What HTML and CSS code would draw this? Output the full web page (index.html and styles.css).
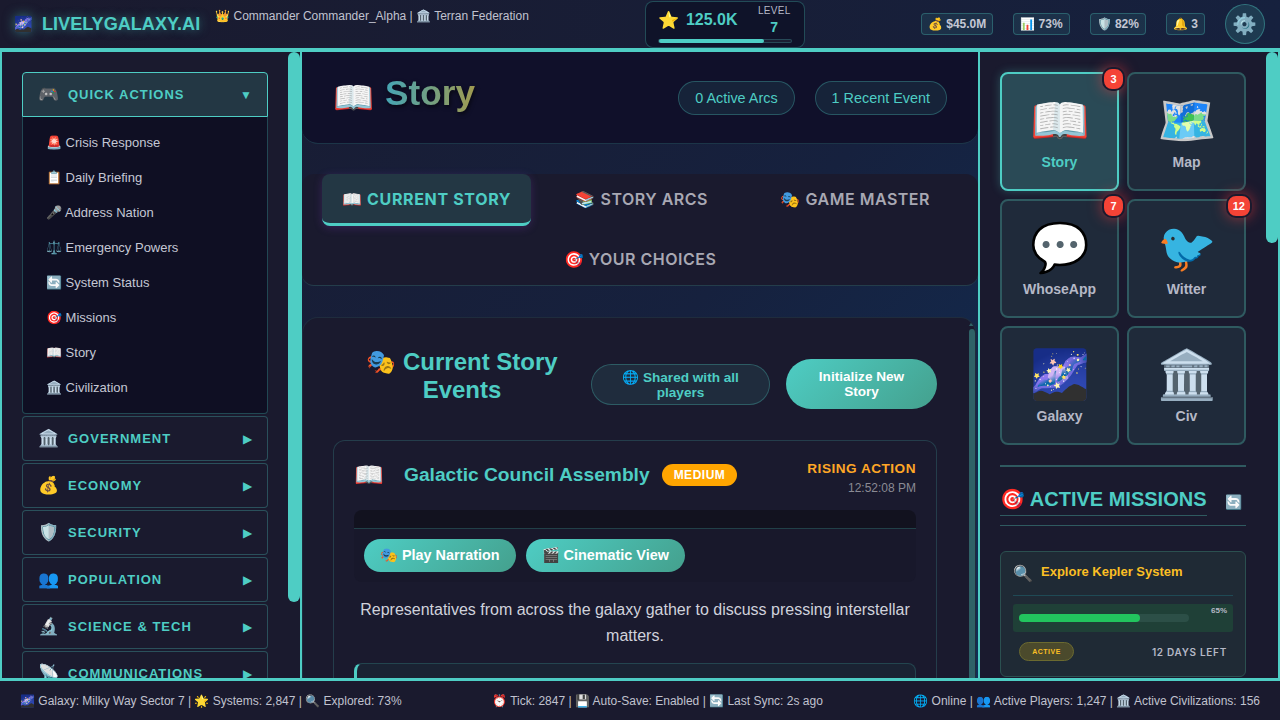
FILE: index.html
```html
<!DOCTYPE html>
<html lang="en">
<head>
<meta charset="utf-8">
<title>LivelyGalaxy.AI</title>
<link rel="stylesheet" href="styles.css">
</head>
<body>
<header class="topbar">
  <div class="brand-group">
    <div class="brand"><span class="brand-icon">🌌</span><span class="brand-name">LIVELYGALAXY.AI</span></div>
    <div class="user-line">👑 Commander Commander_Alpha | 🏛️ Terran Federation</div>
  </div>
  <div class="xp">
    <div class="xp-row">
      <span class="xp-star">⭐</span><span class="xp-value">125.0K</span>
      <div class="xp-level"><span class="xp-level-label">LEVEL</span><span class="xp-level-num">7</span></div>
    </div>
    <div class="xp-track"><div class="xp-fill"></div></div>
  </div>
  <div class="stats">
    <span class="stat">💰 $45.0M</span>
    <span class="stat">📊 73%</span>
    <span class="stat">🛡️ 82%</span>
    <span class="stat">🔔 3</span>
    <button class="gear">⚙️</button>
  </div>
</header>

<main class="layout">
  <nav class="rail rail-left">
    <span class="rail-thumb thumb-left"></span>
    <section class="menu open">
      <div class="menu-head"><span class="menu-icon">🎮</span><span class="menu-name">QUICK ACTIONS</span><span class="menu-arrow">▼</span></div>
      <ul class="submenu">
        <li>🚨 Crisis Response</li>
        <li>📋 Daily Briefing</li>
        <li>🎤 Address Nation</li>
        <li>⚖️ Emergency Powers</li>
        <li>🔄 System Status</li>
        <li>🎯 Missions</li>
        <li>📖 Story</li>
        <li>🏛️ Civilization</li>
      </ul>
    </section>
    <section class="menu"><div class="menu-head"><span class="menu-icon">🏛️</span><span class="menu-name">GOVERNMENT</span><span class="menu-arrow">▶</span></div></section>
    <section class="menu"><div class="menu-head"><span class="menu-icon">💰</span><span class="menu-name">ECONOMY</span><span class="menu-arrow">▶</span></div></section>
    <section class="menu"><div class="menu-head"><span class="menu-icon">🛡️</span><span class="menu-name">SECURITY</span><span class="menu-arrow">▶</span></div></section>
    <section class="menu"><div class="menu-head"><span class="menu-icon">👥</span><span class="menu-name">POPULATION</span><span class="menu-arrow">▶</span></div></section>
    <section class="menu"><div class="menu-head"><span class="menu-icon">🔬</span><span class="menu-name">SCIENCE &amp; TECH</span><span class="menu-arrow">▶</span></div></section>
    <section class="menu"><div class="menu-head"><span class="menu-icon">📡</span><span class="menu-name">COMMUNICATIONS</span><span class="menu-arrow">▶</span></div></section>
  </nav>

  <div class="center">
    <section class="page-head">
      <div class="page-title"><span class="page-emoji">📖</span><h1>Story</h1></div>
      <div class="page-chips"><span class="page-chip">0 Active Arcs</span><span class="page-chip">1 Recent Event</span></div>
    </section>

    <div class="tabs">
      <button class="tab active">📖 CURRENT STORY</button>
      <button class="tab">📚 STORY ARCS</button>
      <button class="tab">🎭 GAME MASTER</button>
      <button class="tab">🎯 YOUR CHOICES</button>
    </div>

    <section class="panel">
      <span class="panel-arrow"></span>
      <span class="panel-thumb"></span>
      <div class="panel-head">
        <h2>🎭 Current Story Events</h2>
        <span class="shared">🌐 Shared with all players</span>
        <button class="primary init">Initialize New Story</button>
      </div>
      <article class="event">
        <div class="event-head">
          <span class="event-emoji">📖</span>
          <h3>Galactic Council Assembly</h3>
          <span class="badge">MEDIUM</span>
          <div class="event-meta"><span class="event-phase">RISING ACTION</span><span class="event-time">12:52:08 PM</span></div>
        </div>
        <div class="media-top"></div>
        <div class="media-controls">
          <button class="primary media-btn">🎭 Play Narration</button>
          <button class="primary media-btn">🎬 Cinematic View</button>
        </div>
        <p class="event-text">Representatives from across the galaxy gather to discuss pressing interstellar matters.</p>
        <div class="event-note"></div>
      </article>
    </section>
  </div>

  <aside class="rail rail-right">
    <span class="rail-thumb thumb-right"></span>
    <div class="apps">
      <div class="app active"><span class="app-badge">3</span><span class="app-icon">📖</span><span class="app-name">Story</span></div>
      <div class="app"><span class="app-icon">🗺️</span><span class="app-name">Map</span></div>
      <div class="app"><span class="app-badge">7</span><span class="app-icon">💬</span><span class="app-name">WhoseApp</span></div>
      <div class="app"><span class="app-badge">12</span><span class="app-icon">🐦</span><span class="app-name">Witter</span></div>
      <div class="app"><span class="app-icon">🌌</span><span class="app-name">Galaxy</span></div>
      <div class="app"><span class="app-icon">🏛️</span><span class="app-name">Civ</span></div>
    </div>
    <div class="missions-head"><h2>🎯 ACTIVE MISSIONS</h2><span class="refresh">🔄</span></div>
    <div class="missions">
      <article class="mission">
        <div class="mission-top"><span class="mission-emoji">🔍</span><span class="mission-name">Explore Kepler System</span></div>
        <div class="mission-progress">
          <span class="mission-pct">65%</span>
          <div class="mission-track"><div class="mission-fill"></div></div>
        </div>
        <div class="mission-foot"><span class="mission-state">ACTIVE</span><span class="mission-left">12 DAYS LEFT</span></div>
      </article>
    </div>
  </aside>
</main>

<footer class="statusbar">
  <span>🌌 Galaxy: Milky Way Sector 7 | 🌟 Systems: 2,847 | 🔍 Explored: 73%</span>
  <span>⏰ Tick: 2847 | 💾 Auto-Save: Enabled | 🔄 Last Sync: 2s ago</span>
  <span>🌐 Online | 👥 Active Players: 1,247 | 🏛️ Active Civilizations: 156</span>
</footer>
</body>
</html>
```
FILE: styles.css
```css
* { box-sizing: border-box; }
html, body { margin: 0; height: 100%; }
body {
  display: flex;
  flex-direction: column;
  height: 720px;
  overflow: hidden;
  font-family: "Liberation Sans", Arial, sans-serif;
  color: #c4c7d4;
  background: linear-gradient(135deg, #1a1a2e 0%, #16213e 50%, #0f3460 100%);
}
button { font-family: inherit; cursor: pointer; border: 0; }
h1, h2, h3, p, ul { margin: 0; padding: 0; }

/* top bar */
.topbar {
  flex: none;
  height: 52px;
  display: flex;
  justify-content: space-between;
  align-items: center;
  padding: 0 15px 0 14px;
  background: linear-gradient(90deg, #1a1a2e, #16213e);
  border-bottom: 4px solid #4ecdc4;
}
.brand-group { display: flex; align-items: flex-start; gap: 15px; align-self: flex-start; }
.brand { display: flex; align-items: center; gap: 9px; height: 48px; }
.brand-icon { font-size: 15px; filter: drop-shadow(0 0 6px rgba(78, 205, 196, .5)); }
.brand-name { font-size: 18.1px; font-weight: 700; color: #4ecdc4; text-shadow: 0 0 10px rgba(78, 205, 196, .5); }
.user-line { font-size: 12px; margin-top: 9px; line-height: 14px; color: #c0c2cf; }
.xp {
  width: 160px;
  height: 47px;
  align-self: flex-start;
  margin-top: 1px;
  padding: 2px 12px 0;
  background: #0f1329;
  border: 1px solid rgba(78, 205, 196, .3);
  border-radius: 8px;
}
.xp-row { display: flex; align-items: center; height: 32px; }
.xp-star { font-size: 17px; width: 28px; }
.xp-value { font-size: 16px; font-weight: 700; color: #4ecdc4; width: 72px; }
.xp-level { display: flex; flex-direction: column; align-items: center; }
.xp-level-label { font-size: 10px; line-height: 14px; letter-spacing: .3px; color: #b5b8c6; }
.xp-level-num { font-size: 14px; font-weight: 700; line-height: 18px; color: #4ecdc4; }
.xp-track { height: 4px; margin-top: 3px; border: 1px solid rgba(78, 205, 196, .25); border-radius: 2px; background: rgba(255, 255, 255, .05); }
.xp-fill { width: 80%; height: 4px; margin-top: -1px; background: #4ecdc4; border-radius: 2px; }
.stats { display: flex; align-items: center; gap: 20px; }
.stat {
  height: 22px;
  padding: 0 6px;
  font-size: 12px;
  font-weight: 700;
  line-height: 20px;
  color: #c4c7d4;
  background: rgba(78, 205, 196, .1);
  border: 1px solid rgba(78, 205, 196, .3);
  border-radius: 4px;
}
.gear {
  width: 40px;
  height: 40px;
  padding: 0;
  font-size: 20px;
  border-radius: 50%;
  background: rgba(78, 205, 196, .15);
  border: 1px solid rgba(78, 205, 196, .4);
  color: #c4c7d4;
}

/* layout */
.layout { flex: 1; min-height: 0; display: flex; }
.rail {
  position: relative;
  flex: none;
  width: 302px;
  padding: 20px 0 0 20px;
  overflow: hidden;
  background: #1a1a2e;
  border-left: 2px solid #4ecdc4;
  border-right: 2px solid #4ecdc4;
}
.rail-thumb { position: absolute; top: 0; right: 0; width: 12px; background: #4ecdc4; border-radius: 6px; }
.thumb-left { height: 550px; }
.thumb-right { height: 191px; }
.center { flex: 1; min-width: 0; display: flex; flex-direction: column; overflow: hidden; }

/* left menu */
.menu { margin-bottom: 2px; width: 246px; }
.menu-head {
  display: flex;
  align-items: center;
  height: 45px;
  padding: 0 15px;
  background: #1a1a2e;
  border: 1px solid rgba(78, 205, 196, .3);
  border-radius: 4px;
}
.menu.open .menu-head { background: #233744; border-color: #4ecdc4; border-radius: 4px 4px 0 0; }
.menu-icon { width: 30px; font-size: 17px; }
.menu-name { flex: 1; font-size: 13px; font-weight: 700; letter-spacing: 1px; color: #4ecdc4; }
.menu-arrow { font-size: 12px; color: #4ecdc4; }
.submenu {
  list-style: none;
  height: 297px;
  padding: 8px 0;
  background: #0f0f23;
  border: 1px solid rgba(78, 205, 196, .3);
  border-top: 0;
  border-radius: 0 0 4px 4px;
}
.submenu li { height: 35px; padding-left: 23px; font-size: 13px; line-height: 35px; color: #c4c7d4; }

/* page head */
.page-head {
  flex: none;
  height: 92px;
  display: flex;
  justify-content: space-between;
  padding: 0 31px 0 30px;
  background: #10102a;
  border-bottom: 1px solid rgba(78, 205, 196, .2);
  border-radius: 0 0 16px 16px;
}
.page-title { display: flex; align-items: flex-start; gap: 11px; padding-top: 20px; }
.page-emoji { font-size: 33px; margin-top: 6px; margin-left: 1px; }
.page-title h1 {
  font-size: 35.2px;
  line-height: 42px;
  font-weight: 700;
  background: linear-gradient(90deg, #45a5b5, #a09a50);
  -webkit-background-clip: text;
  background-clip: text;
  color: transparent;
  filter: drop-shadow(1px 2px 2px rgba(0, 0, 0, .6));
}
.page-chips { display: flex; gap: 20px; padding-top: 29px; }
.page-chip {
  height: 34px;
  padding: 0 16px;
  font-size: 14.4px;
  line-height: 32px;
  color: #4ecdc4;
  background: rgba(78, 205, 196, .1);
  border: 1px solid rgba(78, 205, 196, .3);
  border-radius: 17px;
}

/* tabs */
.tabs {
  flex: none;
  height: 112px;
  margin-top: 30px;
  display: flex;
  flex-wrap: wrap;
  align-content: flex-start;
  gap: 8px;
  padding: 0 20px;
  background: #1a1a2e;
  border-bottom: 1px solid rgba(78, 205, 196, .2);
  border-radius: 12px;
}
.tab {
  flex: 1 1 0;
  min-width: 200px;
  height: 52px;
  padding: 0 20px;
  background: transparent;
  font-family: Inter, sans-serif;
  font-size: 16px;
  font-weight: 600;
  letter-spacing: .5px;
  white-space: nowrap;
  color: #a8a8b3;
  border-bottom: 3px solid transparent;
  border-radius: 8px;
}
.tab.active {
  min-width: 209px;
  font-weight: 700;
  letter-spacing: .65px;
  color: #4ecdc4;
  background: #233744;
  border-bottom-color: #4ecdc4;
  box-shadow: 0 2px 8px rgba(120, 60, 180, .3);
}

/* story panel */
.panel {
  position: relative;
  flex: none;
  height: 500px;
  margin: 31px 2px 0 0;
  padding: 30px 38px 30px 30px;
  overflow: hidden;
  background: #1a1a2e;
  border: 1px solid rgba(78, 205, 196, .1);
  border-radius: 16px;
}
.panel-arrow {
  position: absolute;
  top: 3px;
  right: 0;
  width: 0;
  height: 0;
  border-left: 3px solid transparent;
  border-right: 3px solid transparent;
  border-bottom: 5px solid #2f6267;
}
.panel-thumb { position: absolute; top: 11px; right: 0; bottom: 0; width: 6px; background: #2f6267; border-radius: 3px; }
.panel-head { display: flex; align-items: center; height: 72px; }
.panel-head h2 { align-self: flex-start; width: 258px; flex: none; font-size: 24px; line-height: 28px; font-weight: 700; text-align: center; color: #4ecdc4; }
.shared {
  flex: none;
  width: 179px;
  height: 41px;
  padding: 5px 16px 0;
  font-size: 13.6px;
  font-weight: 700;
  line-height: 15px;
  text-align: center;
  color: #4ecdc4;
  background: rgba(78, 205, 196, .1);
  border: 1px solid rgba(78, 205, 196, .3);
  border-radius: 21px;
}
.primary { color: #fff; font-weight: 700; background: linear-gradient(135deg, #4ecdc4, #44a08d); }
.init { flex: none; width: 151px; height: 50px; margin-left: 16px; padding: 0 20px; font-size: 13.6px; line-height: 15px; border-radius: 25px; }
.event {
  margin-top: 20px;
  padding: 20px;
  background: #1a1a2e;
  border: 1px solid rgba(78, 205, 196, .2);
  border-radius: 12px;
}
.event-head { display: flex; align-items: flex-start; height: 49px; }
.event-emoji { width: 50px; font-size: 24px; line-height: 28px; }
.event-head h3 { font-size: 19.2px; line-height: 28px; font-weight: 700; color: #4ecdc4; }
.badge {
  margin: 3px 0 0 12px;
  height: 22px;
  padding: 0 12px;
  font-size: 12px;
  font-weight: 700;
  line-height: 22px;
  letter-spacing: .5px;
  color: #fff;
  background: #ffa500;
  border-radius: 11px;
}
.event-meta { margin-left: auto; display: flex; flex-direction: column; align-items: flex-end; }
.event-phase { font-size: 13.6px; font-weight: 700; letter-spacing: .5px; line-height: 16px; color: #ffa726; }
.event-time { margin-top: 3px; font-size: 12px; line-height: 16px; color: #8a8a94; }
.media-top { height: 19px; background: #12121f; border-bottom: 1px solid rgba(78, 205, 196, .25); border-radius: 8px 8px 0 0; }
.media-controls { display: flex; gap: 10px; padding: 10px; height: 53px; background: #18182b; border-radius: 0 0 8px 8px; }
.media-btn { height: 33px; padding: 0 16px; font-size: 14.4px; border-radius: 17px; }
.event-text { margin-top: 15px; font-size: 16px; line-height: 26px; text-align: center; color: #d0d2dc; }
.event-note { margin-top: 14px; height: 60px; background: #1a2333; border: 1px solid rgba(78, 205, 196, .2); border-left: 3px solid #4ecdc4; border-radius: 8px; }

/* right rail */
.apps { width: 246px; display: grid; grid-template-columns: 119px 119px; grid-auto-rows: 119px; gap: 8px; }
.app {
  position: relative;
  display: flex;
  flex-direction: column;
  align-items: center;
  padding-top: 19px;
  background: #1f2a3a;
  border: 2px solid #2f5a60;
  border-radius: 8px;
}
.app.active { background: #2a4a56; border-color: #4ecdc4; box-shadow: 0 0 10px rgba(78, 205, 196, .3); }
.app-icon { font-size: 48px; line-height: 56px; }
.app-name { margin-top: 5px; font-size: 14px; font-weight: 700; color: #b5b8c6; }
.app.active .app-name { color: #4ecdc4; }
.app-badge {
  position: absolute;
  top: -7px;
  right: -8px;
  min-width: 23px;
  height: 24px;
  padding: 0 5px;
  font-size: 11px;
  font-weight: 700;
  line-height: 20px;
  text-align: center;
  color: #fff;
  background: #f44336;
  border: 2px solid #1a1a2e;
  border-radius: 10px;
  box-shadow: 0 0 14px rgba(255, 60, 60, .55);
}
.missions-head {
  width: 246px;
  height: 61px;
  margin-top: 20px;
  display: flex;
  align-items: flex-start;
  gap: 18px;
  padding-top: 18px;
  border-top: 2px solid #2f5a60;
  border-bottom: 1px solid #2f5a60;
}
.missions-head h2 { font-size: 20px; line-height: 28px; font-weight: 700; height: 31px; white-space: nowrap; color: #4ecdc4; border-bottom: 1px solid #2f5a60; }
.refresh { font-size: 14px; line-height: 28px; margin-top: 3px; }
.missions { width: 246px; margin-top: 25px; }
.mission {
  height: 126px;
  padding: 12px;
  background: #1f2a35;
  border: 1px solid #2b5050;
  border-radius: 6px;
}
.mission-top { display: flex; height: 32px; gap: 8px; border-bottom: 1px solid #1f4a55; }
.mission-emoji { font-size: 16px; line-height: 20px; }
.mission-name { font-size: 13px; font-weight: 700; line-height: 16px; color: #fbbf24; }
.mission-progress { position: relative; margin-top: 8px; height: 28px; padding: 10px 44px 0 6px; background: #1f4037; border-radius: 3px; }
.mission-pct { position: absolute; top: 2px; right: 6px; font-size: 8px; font-weight: 700; line-height: 9px; color: #b5b8c6; }
.mission-track { height: 8px; background: #2c4f47; border-radius: 4px; }
.mission-fill { width: 71%; height: 8px; background: #22c55e; border-radius: 4px; }
.mission-foot { display: flex; justify-content: space-between; align-items: center; margin-top: 10px; padding: 0 6px; }
.mission-state {
  width: 55px;
  height: 19px;
  font-size: 7px;
  font-weight: 700;
  line-height: 17px;
  letter-spacing: .5px;
  text-align: center;
  color: #fbbf24;
  background: #4b4a2c;
  border: 1px solid #6b6a30;
  border-radius: 10px;
}
.mission-left { font-family: Inter, sans-serif; font-size: 10px; font-weight: 600; letter-spacing: .7px; color: #b5b8c6; }

/* status bar */
.statusbar {
  flex: none;
  height: 42px;
  display: flex;
  justify-content: space-between;
  align-items: center;
  padding: 0 20px;
  font-size: 12px;
  color: #c0c2cf;
  background: #1a1a2e;
  border-top: 3px solid #4ecdc4;
}
```
